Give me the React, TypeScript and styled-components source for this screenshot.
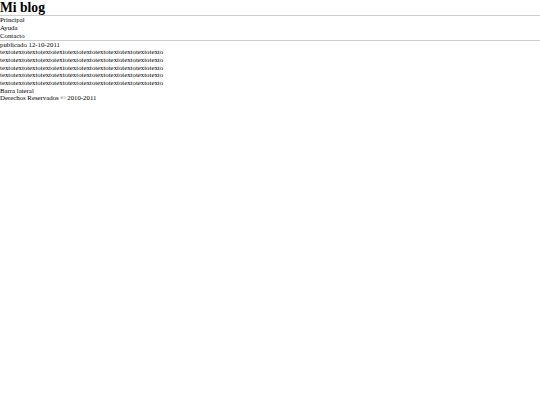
import React from "react"
import styled, { createGlobalStyle } from "styled-components"

const GlobalStyle = createGlobalStyle`
  body {
    margin: 0;
    background: #ffffff;
    color: #000000;
    font-family: "Liberation Serif", "Times New Roman", serif;
    font-size: 6.8px;
    line-height: 7.7px;
  }
`

const menuItems = ["Principal", "Ayuda", "Contacto"]
const lines = [0, 1, 2, 3, 4]
const texto = "texto".repeat(12)

export default function App() {
  return (
    <>
      <GlobalStyle />
      <S.Page>
        <S.Header>
          <S.Title>Mi blog</S.Title>
        </S.Header>
        <S.Nav>
          {menuItems.map((item) => (
            <S.NavItem key={item}>{item}</S.NavItem>
          ))}
        </S.Nav>
        <S.Main>
          <S.Date>publicado 12-10-2011</S.Date>
          {lines.map((i) => (
            <S.Line key={i}>{texto}</S.Line>
          ))}
        </S.Main>
        <S.Aside>Barra lateral</S.Aside>
        <S.Footer>Derechos Reservados © 2010-2011</S.Footer>
      </S.Page>
    </>
  )
}

const S = {
  Page: styled.div`
    display: flex;
    flex-direction: column;
  `,
  Header: styled.header`
    border-bottom: 1px solid #cccccc;
  `,
  Title: styled.h1`
    margin: 0;
    font-size: 2em;
    line-height: 15.4px;
    font-weight: bold;
  `,
  Nav: styled.nav`
    display: flex;
    flex-direction: column;
    border-bottom: 1px solid #cccccc;
  `,
  NavItem: styled.div``,
  Main: styled.section`
    display: flex;
    flex-direction: column;
  `,
  Date: styled.div``,
  Line: styled.div``,
  Aside: styled.aside``,
  Footer: styled.footer``,
}
